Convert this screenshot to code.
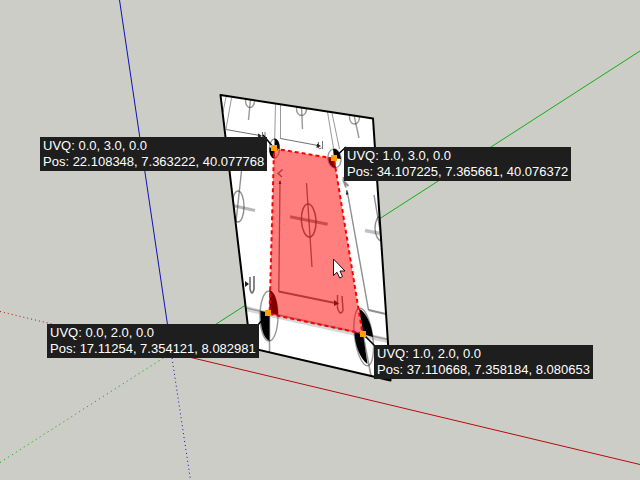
const corners = [
  { id: 'top-left', uvq: '0.0, 3.0, 0.0', pos: '22.108348, 7.363222, 40.077768', place: 'left-[40px] top-[137px]' },
  { id: 'top-right', uvq: '1.0, 3.0, 0.0', pos: '34.107225, 7.365661, 40.076372', place: 'left-[344px] top-[147px]' },
  { id: 'bottom-left', uvq: '0.0, 2.0, 0.0', pos: '17.11254, 7.354121, 8.082981', place: 'left-[47px] top-[324px]' },
  { id: 'bottom-right', uvq: '1.0, 2.0, 0.0', pos: '37.110668, 7.358184, 8.080653', place: 'left-[374px] top-[345px]' },
];

const FACE = 'M220.5 95 373 118.5 390.5 380.5 250.5 348z';
const QUAD = 'M274 148.5 334 158.5 362.5 333.5 269.5 314z';

function Axes() {
  return (
    <g fill="none" strokeWidth="1">
      <path d="M119.5 0 168 328" stroke="#1010b8" />
      <path d="M172 358 190.5 480" stroke="#1010b8" strokeDasharray="1 3" />
      <path d="M172 353 640 464.5" stroke="#b80a0a" />
      <path d="M0 311.5 172 353" stroke="#b80a0a" strokeDasharray="1 3" />
      <path d="M172 352.5 640 51" stroke="#10b010" />
      <path d="M0 462.5 172 352.5" stroke="#10b010" strokeDasharray="1.2 3.5" />
    </g>
  );
}

function Texture() {
  return (
    <g clipPath="url(#face)" fill="none" stroke="#333" strokeWidth="1">
      <g strokeOpacity="0.5">
        <path d="M226 97 223 112M231.5 98 226 129M275.5 103 274.7 140M280.5 105 280.5 138.5M327.5 112 333.5 148M332 113 339.5 149" />
        <path d="M280.5 138.5 318 145.5M226 129.5 260 135.5" strokeOpacity="0.7" />
        <g strokeWidth="1.4">
          <ellipse cx="250" cy="101" rx="4.5" ry="6.5" />
          <path d="M250.5 99 248.5 120" />
          <ellipse cx="301.5" cy="109" rx="5" ry="6.5" />
          <path d="M301.5 106 302.5 129M297 107 308 109" />
          <ellipse cx="354.5" cy="117.5" rx="5" ry="6.5" />
          <path d="M354 115 359 138" />
        </g>
        <path d="M262.500 132v5M265 132v6M318.500 142v6q1 1.500 3 0M322.500 141v8" strokeOpacity="0.7" />
      </g>

      <g strokeOpacity="0.55" strokeWidth="1.4">
        <ellipse cx="238" cy="206.5" rx="6" ry="15.5" />
        <path d="M241.5 171 236 222" />
        <path d="M228 204.5 255 210.5" strokeWidth="3" strokeOpacity="0.35" />
        <ellipse cx="382" cy="228" rx="7" ry="13" />
        <path d="M374 195 381 236" />
        <path d="M365 230.5 380 233.5" strokeWidth="3.5" strokeOpacity="0.3" />
        <path d="M347 190 368.5 310" />
        <path d="M368.5 310 388 314.5" strokeWidth="2" />
        <path d="M343.5 181 348.5 186M344 182 346 187.5M343.5 177v5" strokeWidth="1.8" />
      </g>

      <g strokeOpacity="0.7">
        <path d="M280 181 278.8 291.5" strokeWidth="1.3" />
        <path d="M278.8 291.5 335 303" strokeWidth="1.8" />
        <path d="M282.5 169.5 278 173.5 282 177" strokeWidth="1.4" />
        <ellipse cx="308.7" cy="220.5" rx="7.3" ry="16.5" transform="rotate(-3 308.7 220.5)" strokeWidth="1.5" />
        <path d="M306.5 183 312 267" strokeWidth="1.3" />
        <path d="M290 216.8 327.700 224.3" strokeWidth="3" strokeOpacity="0.5" />
        <path d="M337.500 295v13q3 9 5.500 2l-1-14" strokeWidth="1.500" />
        <path d="M250 277v12q2 8 4 0V276" strokeWidth="1.700" />
      </g>

      <g stroke="none" fill="#222">
        <path d="M317 143.5 321 146 316.5 148zM258 133.5 262 136 258 138zM278.5 184l1.5-4 1.5 4zM334 300l5 3.5-5 2.5zM245 281l4 3-4 3zM346 195l.5-5 2 4z" />
      </g>

      <path d="M246 308.5 268 314 363 335 390 341" strokeWidth="5" strokeOpacity="0.2" />
      <path d="M246 308 268 313 363 334 390 340" strokeWidth="1.5" strokeOpacity="0.35" />
      <path d="M269.500 313V353M363 334 371 376" strokeOpacity="0.5" strokeWidth="1.5" />

      <g strokeOpacity="0.5" strokeWidth="1.4">
        <ellipse cx="274.5" cy="148.5" rx="5" ry="9.5" />
        <ellipse cx="334.5" cy="158.5" rx="6.5" ry="9.5" transform="rotate(-8 334.5 158.5)" />
        <ellipse cx="269" cy="316" rx="9" ry="25" />
        <ellipse cx="363.7" cy="337" rx="9" ry="29" transform="rotate(-8 363.7 337)" />
      </g>
      <g fill="#000" stroke="none">
        <path d="M274.5 148V138.5C278 139 280 143 279.500 149zM274.500 148V158.500C271 158 269 154 269.500 147.500z" />
        <path d="M334 158 333 149C337 148 340 153 341 159zM334 158 336 168C331 168 328 162 328.500 157z" />
        <path d="M269.500 313V290C275 292 278 302 278 315zM269.500 313V341C263 338 260 326 260.500 311z" />
        <path d="M363 334 359 309C366 311 372 326 373 337zM363 334 367.500 364C360 359 354.500 344 354.500 332z" />
      </g>
    </g>
  );
}

function Handle({ x, y }: { x: number; y: number }) {
  return <rect x={x - 3} y={y - 3} width="6" height="6" fill="#ffa200" />;
}

function Scene() {
  return (
    <svg className="block h-full w-full" role="img" aria-label="Textured face with UV coordinates">
      <defs>
        <clipPath id="face">
          <path d={FACE} />
        </clipPath>
      </defs>
      <Axes />
      <path d={FACE} fill="#fff" />
      <Texture />
      <path d={QUAD} fill="#f00" fillOpacity="0.5" />
      <path d={FACE} fill="none" stroke="#000" strokeWidth="2" strokeLinejoin="round" />
      <path d={QUAD} fill="none" stroke="#f00" strokeWidth="2" strokeDasharray="4 3" />
      <path
        d="M263 135 274 148M346 147 334 158M257 326 268.5 313M376 347 363 334"
        fill="none"
        stroke="#000"
        strokeWidth="1.5"
      />
      <Handle x={274} y={148} />
      <Handle x={334} y={158} />
      <Handle x={268} y={313} />
      <Handle x={363} y={334} />
      <path
        d="M333.5 259v16.500l3.500-3.200 2.700 5.700 2.800-1.500-2.500-5.500h5z"
        fill="#fff"
        stroke="#201018"
        strokeWidth="1"
      />
    </svg>
  );
}

export default function App() {
  return (
    <main className="relative h-screen w-full overflow-hidden bg-[#cdcdc8] font-['Liberation_Sans',Arial,sans-serif]">
      <Scene />
      {corners.map((corner) => (
        <div
          key={corner.id}
          className={`absolute ${corner.place} bg-[#1e1e1e] px-[3px] py-px text-[13px] leading-4 whitespace-nowrap text-white`}
        >
          <p>UVQ: {corner.uvq}</p>
          <p>Pos: {corner.pos}</p>
        </div>
      ))}
    </main>
  );
}
